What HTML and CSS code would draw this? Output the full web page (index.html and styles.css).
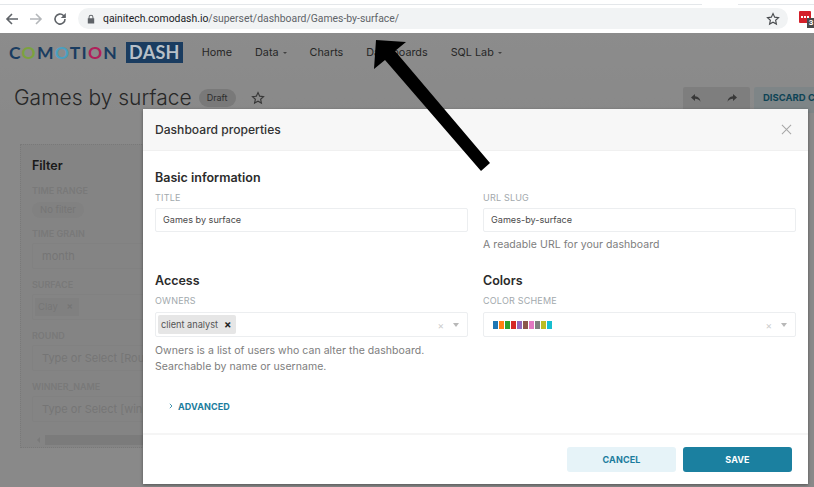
FILE: index.html
```html
<!DOCTYPE html>
<html lang="en">
<head>
<meta charset="utf-8">
<title>Games by surface</title>
<link rel="stylesheet" href="styles.css">
</head>
<body>
<header class="browser">
  <div class="browser-controls">
    <svg class="tool" viewBox="0 0 16 16"><path d="M14 8H3M8 3L3 8l5 5" fill="none" stroke="#5f6368" stroke-width="1.6"/></svg>
    <svg class="tool" viewBox="0 0 16 16"><path d="M2 8h11M8 3l5 5-5 5" fill="none" stroke="#b4b7ba" stroke-width="1.6"/></svg>
    <svg class="tool" viewBox="0 0 16 16"><path d="M13 8a5 5 0 1 1-1.500-3.500L13 6" fill="none" stroke="#5f6368" stroke-width="1.600"/><path d="M13.800 2v5h-5z" fill="#5f6368"/></svg>
  </div>
  <div class="url-pill">
    <svg class="lock" viewBox="0 0 10 12"><path d="M2 5V3.600a3 3 0 0 1 6 0V5h1v6.500H1V5zm1.200 0h3.600V3.600a1.800 1.800 0 0 0-3.600 0z" fill="#5f6368"/></svg>
    <span class="url"><span class="url-host">qainitech.comodash.io</span>/superset/dashboard/Games-by-surface/</span>
    <svg class="url-star" viewBox="0 0 16 16"><path d="M8 1.800l1.900 4.100 4.400.5-3.300 3 .9 4.400L8 11.600l-3.900 2.200.9-4.400-3.300-3 4.400-.5z" fill="none" stroke="#4a4d50" stroke-width="1.300"/></svg>
  </div>
  <div class="extension">
    <span class="ext-square"><i class="ext-dot"></i><i class="ext-dot"></i><i class="ext-dot"></i></span>
    <span class="ext-badge">3</span>
  </div>
</header>

<div class="app">
  <nav class="nav">
    <div class="logo"><span class="logo-word"><span class="c-navy">C</span><span class="c-green">O</span><span class="c-navy">M</span><span class="c-blue">O</span><span class="c-navy">TI</span><span class="c-red">O</span><span class="c-navy">N</span></span><span class="logo-box">DASH</span></div>
    <ul class="nav-links">
      <li>Home</li>
      <li class="caret">Data</li>
      <li>Charts</li>
      <li>Dashboards</li>
      <li class="caret">SQL Lab</li>
    </ul>
  </nav>

  <div class="workspace">
    <div class="title-row">
      <h1 class="dash-title">Games by surface</h1>
      <span class="draft">Draft</span>
      <svg class="dash-star" viewBox="0 0 16 16"><path d="M8 1.800l1.900 4.100 4.400.5-3.300 3 .9 4.400L8 11.600l-3.900 2.200.9-4.400-3.300-3 4.400-.5z" fill="none" stroke="#666" stroke-width="1.300"/></svg>
      <div class="actions">
        <div class="undo-group">
          <svg class="undo-icon" viewBox="0 0 12 12"><path d="M5 2L1 5.500 5 9V6.800c2.500 0 4 .7 5.500 3C10.200 6.500 8.500 4.500 5 4.200z" fill="#666"/></svg>
          <svg class="undo-icon" viewBox="0 0 12 12"><path d="M7 2l4 3.500L7 9V6.800c-2.500 0-4 .7-5.500 3C1.800 6.500 3.500 4.500 7 4.200z" fill="#666"/></svg>
        </div>
        <span class="discard">DISCARD CHANGES</span>
      </div>
    </div>

    <aside class="filter">
      <h2 class="filter-title">Filter</h2>
      <div class="filter-label">TIME RANGE</div>
      <span class="filter-pill">No filter</span>
      <div class="filter-label">TIME GRAIN</div>
      <div class="filter-field">month</div>
      <div class="filter-label">SURFACE</div>
      <div class="filter-field"><span class="filter-tag">Clay <b class="filter-x">×</b></span></div>
      <div class="filter-label">ROUND</div>
      <div class="filter-field">Type or Select [Round]</div>
      <div class="filter-label">WINNER_NAME</div>
      <div class="filter-field">Type or Select [winner_name]</div>
      <div class="filter-scroll"></div>
    </aside>
  </div>

  <div class="scrim"></div>

  <section class="modal">
    <header class="modal-head">
      <h2 class="modal-title">Dashboard properties</h2>
      <svg class="modal-close" viewBox="0 0 12 12"><path d="M1 1l10 10M11 1L1 11" stroke="#a6a6a6" stroke-width="1.100" fill="none"/></svg>
    </header>
    <div class="modal-body">
      <div class="form-grid">
        <div class="col">
          <h3 class="section">Basic information</h3>
          <label class="label">TITLE</label>
          <div class="input">Games by surface</div>
        </div>
        <div class="col">
          <div class="section-spacer"></div>
          <label class="label">URL SLUG</label>
          <div class="input">Games-by-surface</div>
          <p class="help">A readable URL for your dashboard</p>
        </div>
        <div class="col">
          <h3 class="section">Access</h3>
          <label class="label">OWNERS</label>
          <div class="select">
            <span class="tag">client analyst <b class="tag-x">×</b></span>
            <span class="select-tools"><span class="clear">×</span><span class="arrow-down"></span></span>
          </div>
          <p class="help help-owners">Owners is a list of users who can alter the dashboard.<br>Searchable by name or username.</p>
        </div>
        <div class="col">
          <h3 class="section">Colors</h3>
          <label class="label">COLOR SCHEME</label>
          <div class="select select-colors">
            <span class="swatches">
              <i class="sw s1"></i><i class="sw s2"></i><i class="sw s3"></i><i class="sw s4"></i><i class="sw s5"></i><i class="sw s6"></i><i class="sw s7"></i><i class="sw s8"></i><i class="sw s9"></i><i class="sw s10"></i>
            </span>
            <span class="select-tools"><span class="clear">×</span><span class="arrow-down"></span></span>
          </div>
        </div>
      </div>
      <div class="advanced"><svg class="chev" viewBox="0 0 4 6"><path d="M.8.8L3 3 .8 5.200" fill="none" stroke="#1b7c9d" stroke-width=".8"/></svg><span>ADVANCED</span></div>
    </div>
    <footer class="modal-foot">
      <button class="btn btn-cancel">CANCEL</button>
      <button class="btn btn-save">SAVE</button>
    </footer>
  </section>

  <svg class="pointer" viewBox="0 0 140 150"><polygon points="16,10 46,12 35,21 130,133 121,141 25,30 14,39" fill="#000"/></svg>
</div>
</body>
</html>
```

FILE: styles.css
```css
* { box-sizing: border-box; }
html, body { margin: 0; padding: 0; }
body {
  width: 814px;
  height: 487px;
  overflow: hidden;
  background: #fff;
  font-family: Inter, "Liberation Sans", sans-serif;
  color: #323232;
}

/* browser chrome */
.browser {
  height: 33px;
  display: flex;
  align-items: center;
  padding: 4px 0 0 4px;
  background:
    linear-gradient(90deg, transparent 702px, #fff 702px, #fff 738px, transparent 738px),
    linear-gradient(#fff 4px, #e4e7ea 4px, #e4e7ea 5px, #fff 5px);
}
.browser-controls { display: flex; gap: 8px; width: 74px; }
.tool { width: 16px; height: 16px; }
.url-pill {
  width: 710px;
  height: 21px;
  border-radius: 11px;
  background: #f1f3f4;
  display: flex;
  align-items: center;
  padding: 0 8px 0 9px;
}
.lock { width: 8px; height: 10px; margin-right: 8px; }
.url { flex: 1; font: 10.400px Roboto, sans-serif; color: #5f6368; }
.url-host { color: #202124; }
.url-star { width: 14px; height: 14px; }
.extension { position: relative; margin-left: 11px; width: 15px; height: 17px; }
.ext-square {
  position: absolute; left: 0; top: 1px; width: 12px; height: 12px; background: #d4202a; border-radius: 1px;
  display: flex; gap: 1px; justify-content: center; align-items: center;
}
.ext-dot { display: block; width: 2px; height: 2px; background: #fff; }
.ext-badge {
  position: absolute; left: 8px; top: 8px; width: 8px; height: 10px;
  background: #4a4a4a; color: #fff; font: bold 8px/10px Roboto, sans-serif; text-align: center;
}

/* app behind the scrim */
.app { position: relative; height: 454px; background: linear-gradient(#fff, #fafafa 80px); overflow: hidden; }
.nav { height: 38px; display: flex; align-items: center; padding-left: 9px; }
.logo { position: relative; z-index: 1; display: flex; align-items: center; gap: 8px; }
.logo-word { font: 700 17.500px Lato, sans-serif; letter-spacing: 1.250px; }
.c-navy { color: #1a3c60; }
.c-green { color: #7ba23f; }
.c-blue { color: #4a9fc0; }
.c-red { color: #b0205a; }
.logo-box {
  background: #1a3c60; color: #b8c0c8; font: 700 18px/21px Lato, sans-serif;
  padding: 0 3px; height: 21px; letter-spacing: .3px;
}
.nav-links { list-style: none; display: flex; gap: 23px; margin: 0 0 0 19px; padding: 0; font-size: 10.800px; color: #484848; }
.caret { padding-right: 8px; position: relative; }
.caret::after {
  content: ""; position: absolute; right: 0; top: 6px;
  border: 2.500px solid transparent; border-top-color: #777; border-bottom: 0;
}

.workspace { height: 416px; position: relative; }
.title-row { height: 42px; display: flex; align-items: center; padding-left: 14px; padding-top: 11px; }
.dash-title { margin: 0; font-weight: 300; font-size: 21px; color: #484848; white-space: nowrap; }
.draft { margin-left: 7px; background: #dcdcdc; border-radius: 10px; padding: 2px 8px; font-size: 9px; height: 18px; line-height: 14px; color: #555; }
.dash-star { width: 14px; height: 14px; margin-left: 15px; }
.actions { position: absolute; left: 683px; top: 16px; display: flex; gap: 4px; }
.undo-group { flex: none; width: 67px; height: 26px; background: #e6e6e6; border-radius: 2px; display: flex; gap: 24px; align-items: center; padding: 0 0 4px 7px; }
.undo-icon { width: 12px; height: 12px; flex: none; }
.discard { flex: none; background: #e6f2f6; color: #1b7c9d; font-weight: 700; font-size: 9.500px; line-height: 22px; height: 26px; padding: 0 9px; border-radius: 2px; white-space: nowrap; }

.filter {
  position: absolute; left: 20px; top: 73px; width: 220px; height: 304px;
  background: #f1f1f1; border: 1px dotted #ddd; padding: 13px 11px; font-size: 9px; color: #dedede; overflow: hidden;
}
.filter-title { margin: 0 0 12px; font-size: 12.500px; line-height: 15px; font-weight: 600; color: #303030; }
.filter-label { font-weight: 600; font-size: 9px; line-height: 11px; color: #dcdcdc; margin-bottom: 4.500px; margin-top: 9.500px; white-space: nowrap; }
.filter-title + .filter-label { margin-top: 0; }
.filter-pill { display: inline-block; background: #ebebeb; border-radius: 8px; padding: 1px 8px; font-size: 9.500px; color: #d6d6d6; line-height: 14px; margin-top: 1px; vertical-align: top; }
.filter-pill + .filter-label { margin-top: 10px; }
.filter-field { height: 26px; width: 200px; font-size: 11px; line-height: 24px; padding-left: 9px; color: #d6d6d6; white-space: nowrap; border: 1px solid #ececec; border-radius: 2px; }
.filter-tag { background: #eaeaea; display: inline-block; padding: 0 6px 0 3px; font-size: 9.500px; line-height: 18px; margin-left: -7px; vertical-align: top; margin-top: 3px; }
.filter-x { margin-left: 6px; }
.filter-scroll { position: absolute; left: 24px; bottom: 2px; width: 190px; height: 10px; background: #e0e0e0; }
.filter-scroll::before {
  content: ""; position: absolute; left: -8px; top: 2px;
  border: 3px solid transparent; border-right-color: #dcdcdc; border-left: 0;
}

.scrim { position: absolute; inset: 0; background: rgba(0, 0, 0, .45); }

/* modal */
.modal {
  position: absolute; left: 143px; top: 76px; width: 665px; height: 375px;
  background: #fff; display: flex; flex-direction: column;
  box-shadow: 0 1px 3px rgba(0, 0, 0, .4);
}
.modal-head {
  height: 42px; flex: none; background: #f7f7f7; display: flex; align-items: center;
  justify-content: space-between; padding: 0 16px 0 12px; border-bottom: 1px solid #f0f0f0;
}
.modal-title { margin: 0; font-size: 12.100px; font-weight: 500; color: #323232; }
.modal-close { width: 11px; height: 11px; }
.modal-body { flex: 1; padding: 19px 12px 0; }
.form-grid { display: grid; grid-template-columns: 313px 313px; column-gap: 15px; grid-template-rows: 103px auto; }
.section { margin: 0 0 7px; font-size: 12.500px; line-height: 15px; font-weight: 600; color: #2b2b2b; }
.section-spacer { height: 22px; }
.label { display: block; font-size: 9px; line-height: 11px; color: #a2a9ad; margin-bottom: 5px; letter-spacing: .2px; }
.input {
  height: 24px; border: 1px solid #eceef0; border-radius: 2px; padding: 0 7px;
  font-size: 9.100px; line-height: 22px; color: #4a4a4a;
}
.select {
  height: 25px; margin-top: 6px; border: 1px solid #eceef0; border-radius: 2px; padding: 2px; display: flex; align-items: center;
}
.select-colors { padding-left: 9px; }
.tag {
  background: #e6e6e6; border-radius: 2px; height: 19px; padding: 0 4px 0 3px; font-size: 9.200px; line-height: 19px; color: #555;
  display: inline-flex; gap: 6px;
}
.tag-x { color: #222; font-size: 11px; }
.select-tools { margin-left: auto; display: flex; align-items: center; gap: 9px; padding-right: 6px; }
.clear { color: #ccc; font-size: 10px; line-height: 10px; }
.arrow-down { border: 3.500px solid transparent; border-top: 4px solid #b8b8b8; border-bottom: 0; }
.help { margin: 5px 0 0; font-size: 10.500px; line-height: 16.500px; color: #7d7d7d; letter-spacing: .05px; }
.help-owners { margin-top: 5.500px; }
.swatches { display: flex; gap: 1px; }
.sw { display: block; width: 5px; height: 8px; }
.s1 { background: #1f77b4; }
.s2 { background: #ff7f0e; }
.s3 { background: #2ca02c; }
.s4 { background: #d62728; }
.s5 { background: #9467bd; }
.s6 { background: #8c564b; }
.s7 { background: #e377c2; }
.s8 { background: #7f7f7f; }
.s9 { background: #bcbd22; }
.s10 { background: #17becf; }
.advanced { display: flex; align-items: center; gap: 5px; margin: 25px 0 0 14px; font-size: 9px; font-weight: 700; color: #1b7c9d; letter-spacing: .1px; }
.chev { width: 4px; height: 6px; flex: none; }
.modal-foot {
  height: 51px; flex: none; border-top: 2px solid #f5f5f5; display: flex; justify-content: flex-end;
  align-items: flex-start; gap: 7px; padding: 12px 16px 0 0;
}
.btn { width: 109px; height: 25px; border: 0; border-radius: 3px; font: 700 9px Inter, sans-serif; letter-spacing: .1px; }
.btn-cancel { background: #e6f3f8; color: #1b7c9d; }
.btn-save { background: #1b80a0; color: #fff; }

.pointer { position: absolute; left: 360px; top: -3px; width: 140px; height: 150px; }
```
